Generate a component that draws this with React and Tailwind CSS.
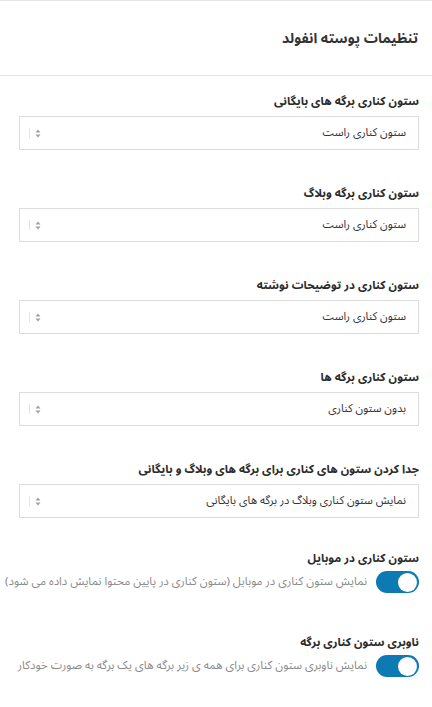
import React from "react";

const font = { fontFamily: '"Noto Sans Arabic", "DejaVu Sans", sans-serif' };

function Arrows() {
  return (
    <svg width="6" height="9" viewBox="0 0 6 9" className="shrink-0">
      <path d="M3 0.5 L5.5 3.5 H0.5 Z" fill="#a0a0a0" />
      <path d="M3 8.5 L5.5 5.5 H0.5 Z" fill="#a0a0a0" />
    </svg>
  );
}

function SelectBox({ value }) {
  return (
    <div className="ml-[6px] h-[34px] border border-[#dcdcdc] bg-white flex items-center justify-between pr-[12px] pl-[9px]">
      <span className="text-[11.2px] text-[#333]">{value}</span>
      <div className="flex items-center gap-[5px]">
        <Arrows />
        <span className="w-px h-[10px] bg-[#e4e4e4]" />
      </div>
    </div>
  );
}

function SelectSection({ label, value }) {
  return (
    <div className="mt-[34px] first:mt-0">
      <div className="h-[20px] leading-[20px] text-[11.6px] font-bold text-[#2c2c2c]">{label}</div>
      <div className="mt-[4px]">
        <SelectBox value={value} />
      </div>
    </div>
  );
}

function Toggle() {
  return (
    <div className="w-[43px] h-[22px] rounded-full bg-[#0d7ab3] flex items-center justify-start pr-[2px] shrink-0">
      <div className="w-[19px] h-[19px] rounded-full bg-white" />
    </div>
  );
}

function ToggleSection({ label, desc, mt }) {
  return (
    <div className={mt}>
      <div className="h-[20px] leading-[20px] text-[11.6px] font-bold text-[#2c2c2c]">{label}</div>
      <div className="mt-[2px] flex items-center gap-[9px]">
        <Toggle />
        <span className="text-[11.5px] text-[#8a8a8a] whitespace-nowrap">{desc}</span>
      </div>
    </div>
  );
}

export default function App() {
  return (
    <div dir="rtl" style={font} className="w-[432px] h-[707px] bg-white border-t border-[#e6e6e6] overflow-hidden">
      <div className="h-[75px] flex items-center pr-[14px] border-b border-[#e6e6e6]">
        <h1 className="text-[14px] font-bold text-[#333]">تنظیمات پوسته انفولد</h1>
      </div>
      <div className="pt-[16px] pr-[13px] pl-[13px]">
        <SelectSection label="ستون کناری برگه های بایگانی" value="ستون کناری راست" />
        <SelectSection label="ستون کناری برگه وبلاگ" value="ستون کناری راست" />
        <SelectSection label="ستون کناری در توضیحات نوشته" value="ستون کناری راست" />
        <SelectSection label="ستون کناری برگه ها" value="بدون ستون کناری" />
        <SelectSection label="جدا کردن ستون های کناری برای برگه های وبلاگ و بایگانی" value="نمایش ستون کناری وبلاگ در برگه های بایگانی" />
        <ToggleSection mt="mt-[31px]" label="ستون کناری در موبایل" desc="نمایش ستون کناری در موبایل (ستون کناری در پایین محتوا نمایش داده می شود)" />
        <ToggleSection mt="mt-[40px]" label="ناوبری ستون کناری برگه" desc="نمایش ناوبری ستون کناری برای همه ی زیر برگه های یک برگه به صورت خودکار" />
      </div>
    </div>
  );
}
